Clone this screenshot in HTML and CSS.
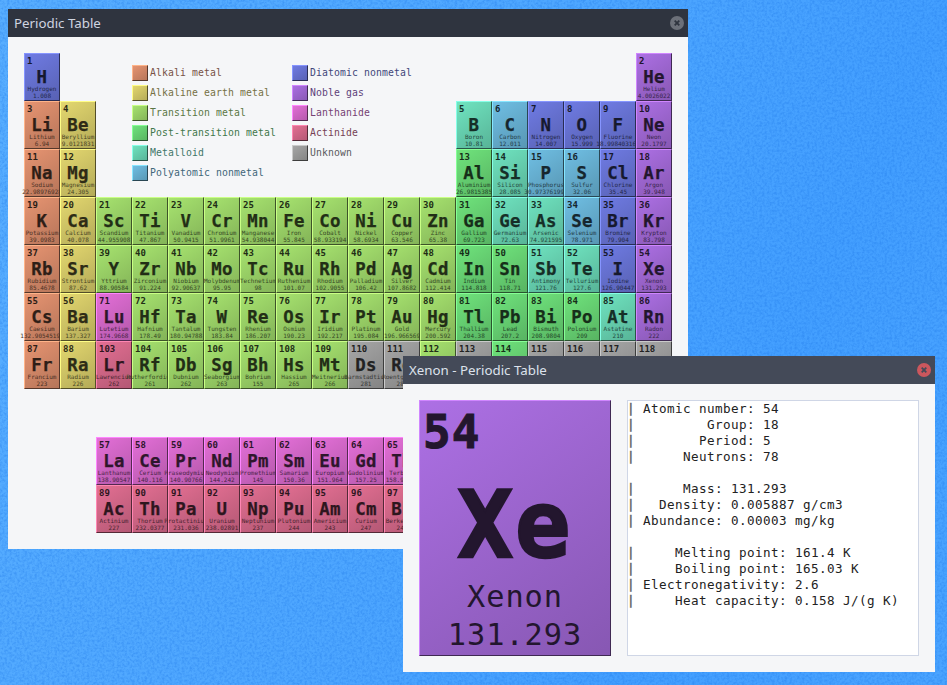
FILE: index.html
```html
<!DOCTYPE html>
<html lang="en">
<head>
<meta charset="utf-8">
<title>Periodic Table</title>
<link rel="stylesheet" href="styles.css">
</head>
<body>
<svg class="grain" aria-hidden="true"><filter id="noise" x="0" y="0" width="100%" height="100%" color-interpolation-filters="sRGB"><feTurbulence type="fractalNoise" baseFrequency="0.4" numOctaves="3" seed="4"/><feColorMatrix values="0 0 0 0 0.1  0 0 0 0 0.45  0 0 0 0 0.9  2.4 0 0 0 -0.9"/></filter><rect width="100%" height="100%" filter="url(#noise)"/></svg>

<main class="window table-window">
  <header class="titlebar"><span>Periodic Table</span>
    <svg class="close" viewBox="0 0 14 14"><circle cx="7" cy="7" r="7"/><path d="M4.7 4.7l4.6 4.6M9.3 4.7l-4.6 4.6"/></svg>
  </header>
  <div class="table" id="table">
    <div class="legend">
      <div class="legend-col">
        <div class="key alkali"><i class="swatch"></i>Alkali metal</div>
        <div class="key earth"><i class="swatch"></i>Alkaline earth metal</div>
        <div class="key transition"><i class="swatch"></i>Transition metal</div>
        <div class="key post"><i class="swatch"></i>Post-transition metal</div>
        <div class="key metalloid"><i class="swatch"></i>Metalloid</div>
        <div class="key poly"><i class="swatch"></i>Polyatomic nonmetal</div>
      </div>
      <div class="legend-col">
        <div class="key diatomic"><i class="swatch"></i>Diatomic nonmetal</div>
        <div class="key noble"><i class="swatch"></i>Noble gas</div>
        <div class="key lanthanide"><i class="swatch"></i>Lanthanide</div>
        <div class="key actinide"><i class="swatch"></i>Actinide</div>
        <div class="key unknown"><i class="swatch"></i>Unknown</div>
      </div>
    </div>
  </div>
</main>

<section class="window detail-window">
  <header class="titlebar"><span>Xenon - Periodic Table</span>
    <svg class="close" viewBox="0 0 14 14"><circle cx="7" cy="7" r="7"/><path d="M4.7 4.7l4.6 4.6M9.3 4.7l-4.6 4.6"/></svg>
  </header>
  <div class="detail">
    <div class="cell noble big"><b class="num">54</b><b class="sym">Xe</b><span class="name">Xenon</span><span class="mass">131.293</span></div>
    <div class="info">
      <p><i>|</i> Atomic number: 54</p>
      <p><i>|</i>         Group: 18</p>
      <p><i>|</i>        Period: 5</p>
      <p><i>|</i>      Neutrons: 78</p>
      <p class="gap"><i>|</i>      Mass: 131.293</p>
      <p><i>|</i>   Density: 0.005887 g/cm3</p>
      <p><i>|</i> Abundance: 0.00003 mg/kg</p>
      <p class="gap"><i>|</i>     Melting point: 161.4 K</p>
      <p><i>|</i>     Boiling point: 165.03 K</p>
      <p><i>|</i> Electronegativity: 2.6</p>
      <p><i>|</i>     Heat capacity: 0.158 J/(g K)</p>
    </div>
  </div>
</section>
<script src="table.js"></script>
</body>
</html>
```
FILE: styles.css
```css
* { box-sizing: border-box; }
body {
  margin: 0;
  width: 947px;
  height: 685px;
  overflow: hidden;
  position: relative;
  background: linear-gradient(115deg, #58aeff 0%, #4da6ff 50%, #439fff 75%, #4aa4ff 100%);
  font-family: "DejaVu Sans Mono", monospace;
}
.grain { position: absolute; inset: 0; width: 100%; height: 100%; opacity: .32; }

.window { position: absolute; background: #f5f6f8; }
.table-window { left: 8px; top: 9px; width: 680px; height: 540px; }
.detail-window { left: 403px; top: 356px; width: 532px; height: 316px; }
.titlebar {
  height: 28px;
  display: flex;
  align-items: center;
  justify-content: space-between;
  padding: 0 4px 0 6px;
  font: 13.3px/28px "Noto Sans", sans-serif;
  background: #2f343f;
  color: #cfd5e0;
}
.titlebar span { white-space: pre; }
.close { width: 14px; height: 14px; }
.close circle { fill: #6c7079; }
.close path { stroke: #2f343f; stroke-width: 1.8; }
.detail-window .titlebar { background: #444a58; color: #dde2ec; }
.detail-window .close circle { fill: #cc575d; }
.detail-window .close path { stroke: #444a58; }

.table {
  margin: 16px;
  display: grid;
  grid-template-columns: repeat(18, 36px);
  grid-template-rows: repeat(10, 48px);
}
.legend {
  grid-area: 1 / 4 / 4 / 13;
  display: flex;
  padding-top: 12px;
}
.legend-col { flex: none; width: 160px; }
.key {
  height: 20px;
  display: flex;
  align-items: flex-start;
  gap: 2px;
  font-size: 9.8px;
  letter-spacing: .1px;
  line-height: 16px;
  white-space: pre;
  color: color-mix(in srgb, var(--c) 45%, #1c1c22);
}
.swatch { width: 16px; height: 16px; }

.alkali { --c: #e89572; --l: #ffb489; --d: #54372b; }
.earth { --c: #e5d970; --l: #fffd86; --d: #534e29; }
.transition { --c: #a8e570; --l: #caff86; --d: #3d5329; }
.post { --c: #70e57d; --l: #86ff96; --d: #29532e; }
.metalloid { --c: #70e5c1; --l: #86ffe8; --d: #295346; }
.poly { --c: #70c0e5; --l: #86e6ff; --d: #294653; }
.diatomic { --c: #707ce5; --l: #8695ff; --d: #292d53; }
.noble { --c: #ad70e5; --l: #d086ff; --d: #3f2953; }
.lanthanide { --c: #e570d9; --l: #ff86ff; --d: #53294f; }
.actinide { --c: #e57094; --l: #ff86b2; --d: #532936; }
.unknown { --c: #a8a8a8; --l: #cacaca; --d: #3d3d3d; }

.cell, .swatch {
  border: 1px solid;
  border-color: var(--l) var(--d) var(--d) var(--l);
  background: linear-gradient(145deg, var(--c), color-mix(in srgb, var(--c) 78%, #000)) border-box;
}
.cell {
  --u: 1px;
  width: calc(36 * var(--u));
  height: calc(48 * var(--u));
  display: flex;
  flex-direction: column;
  align-items: center;
  white-space: nowrap;
  color: color-mix(in srgb, var(--c) 20%, #000);
}
.num {
  align-self: flex-start;
  margin: 3px 0 0 2px;
  font-size: 9px;
  line-height: 9px;
}
.sym {
  margin-top: 2px;
  font-size: 17.4px;
  letter-spacing: .3px;
  line-height: 18px;
  -webkit-text-stroke: .25px;
}
.name, .mass {
  font-size: 6px;
  line-height: 7px;
  color: color-mix(in srgb, var(--c) 32%, #000);
}
.name { margin-top: -1px; }
.big { --u: 5.3333px; }
.big .num {
  margin: 4px 0 0 3px;
  font-size: 46px;
  letter-spacing: 1.1px;
  line-height: 54px;
  -webkit-text-stroke: 1px;
}
.big .sym {
  margin-top: 14px;
  font-size: 92px;
  letter-spacing: 2px;
  line-height: 106px;
  -webkit-text-stroke: 2.4px;
}
.big .name, .big .mass {
  font-size: 30.3px;
  letter-spacing: .96px;
  line-height: 38px;
  color: inherit;
}
.big .name { margin-top: -1px; }

.detail { display: flex; gap: 16px; padding: 16px; }
.info {
  width: 292px;
  height: 256px;
  background: #fff;
  border: 1px solid #cfd6e6;
  color: #222;
  font-size: 12.6px;
  letter-spacing: .415px;
  line-height: 16px;
}
.info p {
  margin: 0 0 0 -1px;
  height: 16px;
  white-space: pre;
}
.info i { font-style: normal; color: #666; -webkit-text-stroke: .5px; }
.info .gap { margin-top: 16px; }
```
FILE: table.js
```js
// Each entry: row, first column, category codes per element, then elements as number|symbol|name|mass.
const kinds = { a: 'alkali', e: 'earth', t: 'transition', p: 'post', m: 'metalloid', y: 'poly', d: 'diatomic', n: 'noble', l: 'lanthanide', c: 'actinide', u: 'unknown' };
const rows = [
  [1, 1, 'd', '1|H|Hydrogen|1.008'],
  [1, 18, 'n', '2|He|Helium|4.0026022'],
  [2, 1, 'ae', '3|Li|Lithium|6.94,4|Be|Beryllium|9.0121831'],
  [2, 13, 'mydddn', '5|B|Boron|10.81,6|C|Carbon|12.011,7|N|Nitrogen|14.007,8|O|Oxygen|15.999,9|F|Fluorine|18.998403163,10|Ne|Neon|20.1797'],
  [3, 1, 'ae', '11|Na|Sodium|22.98976928,12|Mg|Magnesium|24.305'],
  [3, 13, 'pmyydn', '13|Al|Aluminium|26.9815385,14|Si|Silicon|28.085,15|P|Phosphorus|30.973761998,16|S|Sulfur|32.06,17|Cl|Chlorine|35.45,18|Ar|Argon|39.948'],
  [4, 1, 'aettttttttttpmmydn', '19|K|Potassium|39.0983,20|Ca|Calcium|40.078,21|Sc|Scandium|44.955908,22|Ti|Titanium|47.867,23|V|Vanadium|50.9415,24|Cr|Chromium|51.9961,25|Mn|Manganese|54.938044,26|Fe|Iron|55.845,27|Co|Cobalt|58.933194,28|Ni|Nickel|58.6934,29|Cu|Copper|63.546,30|Zn|Zinc|65.38,31|Ga|Gallium|69.723,32|Ge|Germanium|72.63,33|As|Arsenic|74.921595,34|Se|Selenium|78.971,35|Br|Bromine|79.904,36|Kr|Krypton|83.798'],
  [5, 1, 'aettttttttttppmmdn', '37|Rb|Rubidium|85.4678,38|Sr|Strontium|87.62,39|Y|Yttrium|88.90584,40|Zr|Zirconium|91.224,41|Nb|Niobium|92.90637,42|Mo|Molybdenum|95.95,43|Tc|Technetium|98,44|Ru|Ruthenium|101.07,45|Rh|Rhodium|102.9055,46|Pd|Palladium|106.42,47|Ag|Silver|107.8682,48|Cd|Cadmium|112.414,49|In|Indium|114.818,50|Sn|Tin|118.71,51|Sb|Antimony|121.76,52|Te|Tellurium|127.6,53|I|Iodine|126.90447,54|Xe|Xenon|131.293'],
  [6, 1, 'aeltttttttttppppmn', '55|Cs|Caesium|132.90545196,56|Ba|Barium|137.327,71|Lu|Lutetium|174.9668,72|Hf|Hafnium|178.49,73|Ta|Tantalum|180.94788,74|W|Tungsten|183.84,75|Re|Rhenium|186.207,76|Os|Osmium|190.23,77|Ir|Iridium|192.217,78|Pt|Platinum|195.084,79|Au|Gold|196.966569,80|Hg|Mercury|200.592,81|Tl|Thallium|204.38,82|Pb|Lead|207.2,83|Bi|Bismuth|208.9804,84|Po|Polonium|209,85|At|Astatine|210,86|Rn|Radon|222'],
  [7, 1, 'aecttttttuutupuuuu', '87|Fr|Francium|223,88|Ra|Radium|226,103|Lr|Lawrencium|262,104|Rf|Rutherfordium|261,105|Db|Dubnium|262,106|Sg|Seaborgium|263,107|Bh|Bohrium|155,108|Hs|Hassium|265,109|Mt|Meitnerium|266,110|Ds|Darmstadtium|281,111|Rg|Roentgenium|282,112|||,113|||,114|||,115|||,116|||,117|||,118|||'],
  [9, 3, 'lllllllll', '57|La|Lanthanum|138.90547,58|Ce|Cerium|140.116,59|Pr|Praseodymium|140.90766,60|Nd|Neodymium|144.242,61|Pm|Promethium|145,62|Sm|Samarium|150.36,63|Eu|Europium|151.964,64|Gd|Gadolinium|157.25,65|Tb|Terbium|158.92535'],
  [10, 3, 'ccccccccc', '89|Ac|Actinium|227,90|Th|Thorium|232.0377,91|Pa|Protactinium|231.036,92|U|Uranium|238.02891,93|Np|Neptunium|237,94|Pu|Plutonium|244,95|Am|Americium|243,96|Cm|Curium|247,97|Bk|Berkelium|247']
];
const table = document.getElementById('table');
for (const [row, col, codes, list] of rows) {
  list.split(',').forEach((item, i) => {
    const [num, sym, name, mass] = item.split('|');
    const cell = document.createElement('div');
    cell.className = 'cell ' + kinds[codes[i]];
    cell.style.gridArea = row + ' / ' + (col + i);
    cell.innerHTML = `<b class="num">${num}</b><b class="sym">${sym}</b><span class="name">${name}</span><span class="mass">${mass}</span>`;
    table.append(cell);
  });
}
```
